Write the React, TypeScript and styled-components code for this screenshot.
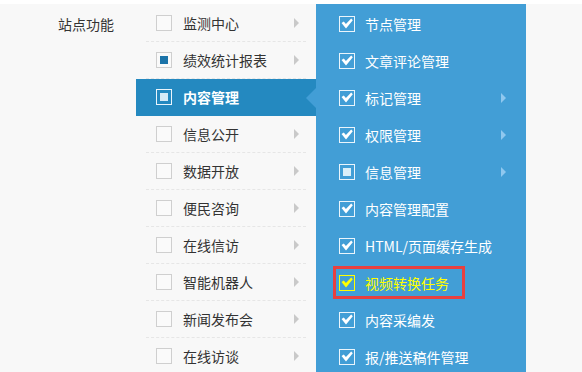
import React from "react";
import styled, { createGlobalStyle, css } from "styled-components";

const Global = createGlobalStyle`
  html, body { margin: 0; padding: 0; background: #ffffff; }
  body { font-family: "Noto Sans CJK SC", "Noto Sans", sans-serif; }
`;

const PANEL = "#429ed6";
const SELECTED = "#2489c0";

const Page = styled.div`
  width: 582px;
  height: 372px;
  overflow: hidden;
  padding-top: 4px;
  box-sizing: border-box;
  background: #ffffff;
`;

const Content = styled.div`
  display: flex;
  height: 368px;
  background: #f8f8f8;
`;

const LabelCol = styled.div`
  width: 136px;
  box-sizing: border-box;
  padding: 1px 0 0 58px;
`;

const Label = styled.div`
  height: 37px;
  display: flex;
  align-items: center;
  font-size: 14px;
  color: #333333;
`;

const MidCol = styled.div`
  width: 180px;
  padding-top: 1px;
`;

const MidRow = styled.div<{ $selected?: boolean }>`
  position: relative;
  padding: 0 10px;
  ${(p) =>
    p.$selected &&
    css`
      background: ${SELECTED};
      &::after {
        content: "";
        position: absolute;
        right: 0;
        top: 9px;
        border-top: 10px solid transparent;
        border-bottom: 10px solid transparent;
        border-right: 10px solid ${PANEL};
      }
    `}
`;

const MidInner = styled.div<{ $selected?: boolean }>`
  height: 36px;
  display: flex;
  align-items: center;
  padding: 0 7px 0 10px;
  border-bottom: 1px dashed ${(p) => (p.$selected ? "transparent" : "#e6e6e6")};
`;

const Box = styled.span<{ $tone: "gray" | "white" | "yellow" }>`
  width: 16px;
  height: 16px;
  box-sizing: border-box;
  flex: none;
  display: flex;
  align-items: center;
  justify-content: center;
  border: 1px solid
    ${(p) => (p.$tone === "gray" ? "#cfcfcf" : p.$tone === "yellow" ? "#ffff00" : "#eaf5fc")};
  background: ${(p) => (p.$tone === "gray" ? "#fafafa" : "transparent")};
`;

const Dot = styled.span<{ $color: string }>`
  width: 8px;
  height: 8px;
  background: ${(p) => p.$color};
`;

const MidText = styled.span<{ $selected?: boolean }>`
  margin-left: 11px;
  flex: 1;
  font-size: 14px;
  color: ${(p) => (p.$selected ? "#ffffff" : "#333333")};
  font-weight: ${(p) => (p.$selected ? 700 : 400)};
`;

const Arrow = styled.span<{ $color: string }>`
  width: 0;
  height: 0;
  border-top: 5px solid transparent;
  border-bottom: 5px solid transparent;
  border-left: 5px solid ${(p) => p.$color};
`;

const Panel = styled.div`
  width: 210px;
  background: ${PANEL};
  padding: 1px 20px 0 23px;
  box-sizing: border-box;
`;

const PanelRow = styled.div`
  height: 37px;
  display: flex;
  align-items: center;
`;

const Highlight = styled.span`
  display: flex;
  align-items: center;
  height: 33px;
  box-sizing: border-box;
  margin-left: -6px;
  padding: 0 13px 0 3px;
  border: 3px solid #e8403f;
`;

const PanelText = styled.span<{ $yellow?: boolean }>`
  margin-left: 10px;
  flex: 1;
  font-size: 14px;
  color: ${(p) => (p.$yellow ? "#ffff00" : "#ffffff")};
`;

const Check = ({ color }: { color: string }) => (
  <svg width="12" height="11" viewBox="0 0 12 11">
    <path d="M0.5 5 L2.8 3.4 L4.9 6 L10.2 0.5 L11.8 2.2 L5 10.5 Z" fill={color} />
  </svg>
);

type MidItem = { name: string; state?: "none" | "partial" | "selected"; arrow: boolean };

const midItems: MidItem[] = [
  { name: "监测中心", arrow: true },
  { name: "绩效统计报表", state: "partial", arrow: true },
  { name: "内容管理", state: "selected", arrow: false },
  { name: "信息公开", arrow: true },
  { name: "数据开放", arrow: true },
  { name: "便民咨询", arrow: true },
  { name: "在线信访", arrow: true },
  { name: "智能机器人", arrow: true },
  { name: "新闻发布会", arrow: true },
  { name: "在线访谈", arrow: true },
];

type PanelItem = { name: string; partial?: boolean; arrow?: boolean; highlight?: boolean };

const panelItems: PanelItem[] = [
  { name: "节点管理" },
  { name: "文章评论管理" },
  { name: "标记管理", arrow: true },
  { name: "权限管理", arrow: true },
  { name: "信息管理", partial: true, arrow: true },
  { name: "内容管理配置" },
  { name: "HTML/页面缓存生成" },
  { name: "视频转换任务", highlight: true },
  { name: "内容采编发" },
  { name: "报/推送稿件管理" },
];

export default function App() {
  return (
    <Page>
      <Global />
      <Content>
        <LabelCol>
          <Label>站点功能</Label>
        </LabelCol>
        <MidCol>
          {midItems.map((it) => {
            const sel = it.state === "selected";
            return (
              <MidRow key={it.name} $selected={sel}>
                <MidInner $selected={sel}>
                  {sel ? (
                    <Box $tone="white">
                      <Dot $color="#d6ebf7" />
                    </Box>
                  ) : (
                    <Box $tone="gray">
                      {it.state === "partial" && <Dot $color="#1b74a9" />}
                    </Box>
                  )}
                  <MidText $selected={sel}>{it.name}</MidText>
                  {it.arrow && <Arrow $color="#c9c9c9" />}
                </MidInner>
              </MidRow>
            );
          })}
        </MidCol>
        <Panel>
          {panelItems.map((it) => {
            const box = it.partial ? (
              <Box $tone="white">
                <Dot $color="#dceff9" />
              </Box>
            ) : (
              <Box $tone={it.highlight ? "yellow" : "white"}>
                <Check color={it.highlight ? "#ffff00" : "#ffffff"} />
              </Box>
            );
            return (
              <PanelRow key={it.name}>
                {it.highlight ? (
                  <Highlight>
                    {box}
                    <PanelText $yellow>{it.name}</PanelText>
                  </Highlight>
                ) : (
                  <>
                    {box}
                    <PanelText>{it.name}</PanelText>
                  </>
                )}
                {it.arrow && <Arrow $color="#8fc8ef" />}
              </PanelRow>
            );
          })}
        </Panel>
      </Content>
    </Page>
  );
}
